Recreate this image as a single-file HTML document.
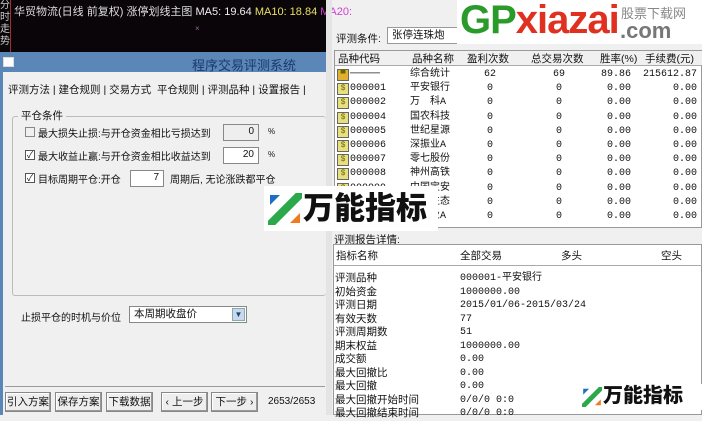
<!DOCTYPE html>
<html><head><meta charset="utf-8"><style>
*{margin:0;padding:0;box-sizing:border-box}
body{width:702px;height:415px;overflow:hidden;background:#f0f0f0;position:relative;font-family:"Liberation Sans","Noto Sans CJK SC",sans-serif;font-size:11px;color:#111}
.a{position:absolute;white-space:nowrap}
.btn{position:absolute;border:1px solid #888;background:#eee;height:20px;top:392px;font-size:10.5px;text-align:center;line-height:18px;box-shadow:inset -1px -1px #999,inset 1px 1px #fff}
.cb{position:absolute;width:10px;height:10px;border:1px solid #555;background:#fff;font-size:9px;line-height:8px;text-align:center}
.inp{position:absolute;background:#fff;border:1px solid #888;text-align:right;padding-right:4px;font-size:10px;line-height:14px;height:17px}
.mono{font-family:"Liberation Mono","Noto Sans CJK SC",monospace}
.s{position:absolute;left:2px;top:1px;width:12px;height:12px;border:1px solid #666;background:#e8e080;font-size:8px;line-height:10px;text-align:center;color:#660}
.r{position:relative;height:14.2px}
.r span{position:absolute}
.c1{left:15px}.c2{left:75px}
.c3{left:130px;width:50px;text-align:center}
.c4{left:190px;width:68px;text-align:center}
.c5{left:250px;width:46px;text-align:right}
.c6{left:300px;width:62px;text-align:right}
</style></head><body>
<div class="a" style="left:0;top:0;width:326px;height:52px;background:#0a0508"></div>
<div class="a" style="left:0;top:0;height:52px;border-right:1px solid #a03030;color:#ccc;font-size:10px;line-height:12px;white-space:normal;width:11px">分时走势</div>
<div class="a" style="left:14px;top:3px;color:#ddd;font-size:11px">华贸物流(日线 前复权) 涨停划线主图 <span style="color:#eee">MA5: 19.64</span> <span style="color:#e8e060">MA10: 18.84</span> <span style="color:#d040d0">MA20:</span></div>
<div class="a" style="left:195px;top:24px;color:#a060a0;font-size:8px">×</div>
<div class="a" style="left:0;top:52px;width:326px;height:20px;background:#5b87b8"></div>
<div class="a" style="left:3px;top:57px;width:11px;height:10px;background:#fff;border:1px solid #ddd"></div>
<div class="a" style="left:192px;top:55px;color:#1a3a6a;font-size:13px">程序交易评测系统</div>
<div class="a" style="left:0;top:72px;width:3px;height:343px;background:#5b87b8"></div>
<div class="a" style="left:8px;top:82px;font-size:10.5px">评测方法 | 建仓规则 | 交易方式 &nbsp;平仓规则 | 评测品种 | 设置报告 |</div>
<div class="a" style="left:12px;top:116px;width:314px;height:180px;border:1px solid #bbb;border-radius:3px;border-right:none"></div>
<div class="a" style="left:18px;top:108px;background:#f0f0f0;padding:0 3px;font-size:10.5px">平仓条件</div>
<div class="cb" style="left:25px;top:127px;border-color:#888;background:#f0f0f0"></div>
<div class="a" style="left:38px;top:125px;font-size:10px">最大损失止损:与开仓资金相比亏损达到</div>
<div class="inp" style="left:223px;top:124px;width:36px;background:#eee">0</div><div class="a" style="left:268px;top:127px;font-size:8px">%</div>
<div class="cb" style="left:25px;top:150px">✓</div>
<div class="a" style="left:38px;top:148px;font-size:10px">最大收益止赢:与开仓资金相比收益达到</div>
<div class="inp" style="left:223px;top:147px;width:36px">20</div><div class="a" style="left:268px;top:150px;font-size:8px">%</div>
<div class="cb" style="left:25px;top:173px">✓</div>
<div class="a" style="left:38px;top:171px;font-size:10px">目标周期平仓:开仓</div>
<div class="inp" style="left:130px;top:170px;width:34px">7</div>
<div class="a" style="left:170px;top:171px;font-size:10px">周期后, 无论涨跌都平仓</div>
<div class="a" style="left:21px;top:309px;font-size:10px">止损平仓的时机与价位</div>
<div class="a" style="left:129px;top:306px;width:118px;height:17px;background:#fff;border:1px solid #888;padding-left:4px;line-height:15px;font-size:10.5px">本周期收盘价</div>
<div class="a" style="left:232px;top:308px;width:13px;height:13px;background:#c8d8ee;border:1px solid #8aa;color:#246;font-size:8px;text-align:center;line-height:12px">▼</div>
<div class="a" style="left:5px;top:386px;width:320px;height:1px;background:#999"></div>
<div class="btn" style="left:5px;width:46px">引入方案</div>
<div class="btn" style="left:55px;width:47px">保存方案</div>
<div class="btn" style="left:106px;width:47px">下载数据</div>
<div class="btn" style="left:161px;width:47px">‹ 上一步</div>
<div class="btn" style="left:211px;width:47px">下一步 ›</div>
<div class="a" style="left:268px;top:396px;font-size:10px">2653/2653</div>
<div class="a" style="left:326px;top:0;width:6px;height:415px;background:#e4e4e4"></div>
<div class="a" style="left:336px;top:31px;font-size:10.5px">评测条件:</div>
<div class="a" style="left:387px;top:27px;width:140px;height:17px;background:#fff;border:1px solid #999;padding-left:4px;line-height:15px;font-size:10.5px">张停连珠炮</div>
<div class="a" style="left:334px;top:50px;width:368px;height:178px;background:#fff;border:1px solid #999"></div>
<div class="a" style="left:335px;top:51px;width:367px;height:15px;background:#f0f0f0;border-bottom:1px solid #aaa;font-size:10.5px">
<div class="r"><span style="left:3px">品种代码</span><span style="left:77px">品种名称</span><span style="left:132px">盈利次数</span><span style="left:196px">总交易次数</span><span style="left:265px">胜率(%)</span><span style="left:310px">手续费(元)</span></div></div>
<div class="a mono" style="left:335px;top:68px;width:367px;font-size:10px;line-height:14.2px">
<div class="r"><span class="s" style="background:#e0b030">▀</span><span class="c1">─────</span><span class="c2">综合统计</span><span class="c3">62</span><span class="c4">69</span><span class="c5">89.86</span><span class="c6">215612.87</span></div>
<div class="r"><span class="s">$</span><span class="c1">000001</span><span class="c2">平安银行</span><span class="c3">0</span><span class="c4">0</span><span class="c5">0.00</span><span class="c6">0.00</span></div>
<div class="r"><span class="s">$</span><span class="c1">000002</span><span class="c2">万　科A</span><span class="c3">0</span><span class="c4">0</span><span class="c5">0.00</span><span class="c6">0.00</span></div>
<div class="r"><span class="s">$</span><span class="c1">000004</span><span class="c2">国农科技</span><span class="c3">0</span><span class="c4">0</span><span class="c5">0.00</span><span class="c6">0.00</span></div>
<div class="r"><span class="s">$</span><span class="c1">000005</span><span class="c2">世纪星源</span><span class="c3">0</span><span class="c4">0</span><span class="c5">0.00</span><span class="c6">0.00</span></div>
<div class="r"><span class="s">$</span><span class="c1">000006</span><span class="c2">深振业A</span><span class="c3">0</span><span class="c4">0</span><span class="c5">0.00</span><span class="c6">0.00</span></div>
<div class="r"><span class="s">$</span><span class="c1">000007</span><span class="c2">零七股份</span><span class="c3">0</span><span class="c4">0</span><span class="c5">0.00</span><span class="c6">0.00</span></div>
<div class="r"><span class="s">$</span><span class="c1">000008</span><span class="c2">神州高铁</span><span class="c3">0</span><span class="c4">0</span><span class="c5">0.00</span><span class="c6">0.00</span></div>
<div class="r"><span class="s">$</span><span class="c1">000009</span><span class="c2">中国宝安</span><span class="c3">0</span><span class="c4">0</span><span class="c5">0.00</span><span class="c6">0.00</span></div>
<div class="r"><span class="s">$</span><span class="c1">000010</span><span class="c2">美丽生态</span><span class="c3">0</span><span class="c4">0</span><span class="c5">0.00</span><span class="c6">0.00</span></div>
<div class="r"><span class="s">$</span><span class="c1">000011</span><span class="c2">深物业A</span><span class="c3">0</span><span class="c4">0</span><span class="c5">0.00</span><span class="c6">0.00</span></div>
</div>
<div class="a" style="left:334px;top:232px;font-size:10.5px">评测报告详情:</div>
<div class="a" style="left:333px;top:244px;width:369px;height:171px;background:#fff;border:1px solid #999"></div>
<div class="a" style="left:336px;top:248px;font-size:10.5px">指标名称</div><div class="a" style="left:460px;top:248px;font-size:10.5px">全部交易</div><div class="a" style="left:561px;top:248px;font-size:10.5px">多头</div><div class="a" style="left:661px;top:248px;font-size:10.5px">空头</div>
<div class="a" style="left:334px;top:265px;width:368px;height:1px;background:#aaa"></div>
<div class="a" style="left:335px;top:272px;line-height:13.5px;font-size:10.5px">评测品种<br>初始资金<br>评测日期<br>有效天数<br>评测周期数<br>期末权益<br>成交额<br>最大回撤比<br>最大回撤<br>最大回撤开始时间<br>最大回撤结束时间</div>
<div class="a mono" style="left:460px;top:272px;line-height:13.5px;font-size:10px">000001-平安银行<br>1000000.00<br>2015/01/06-2015/03/24<br>77<br>51<br>1000000.00<br>0.00<br>0.00<br>0.00<br>0/0/0 0:0<br>0/0/0 0:0</div>
<div class="a" style="left:457px;top:0;width:245px;height:44px;background:#fff"></div>
<div class="a" style="left:460px;top:-4px;font-size:40px;font-weight:bold;letter-spacing:-1px;line-height:48px"><span style="color:#2a9a2a">GP</span><span style="color:#e03020">xiazai</span></div>
<div class="a" style="left:620px;top:18px;font-size:22px;font-weight:bold;color:#777">.com</div>
<div class="a" style="left:621px;top:3px;font-size:13px;color:#888">股票下载网</div>
<div class="a" style="left:264px;top:186px;width:174px;height:45px;background:#fff"></div>
<svg class="a" style="left:268px;top:193px" width="34" height="32" viewBox="0 0 34 32"><path d="M2 2h10l-10 10z" fill="#1c6fc4"/><path d="M2 30l28-28h3l-28 28z" fill="#2aa84a" stroke="#2aa84a" stroke-width="6"/><path d="M32 30h-10l10-10z" fill="#f07a20"/></svg>
<div class="a" style="left:303px;top:190px;font-size:31px;font-weight:900;color:#111;line-height:38px">万能指标</div>
<div class="a" style="left:580px;top:384px;width:122px;height:26px;background:#fff"></div>
<svg class="a" style="left:582px;top:387px" width="20" height="20" viewBox="0 0 34 32"><path d="M2 2h10l-10 10z" fill="#1c6fc4"/><path d="M2 30l28-28h3l-28 28z" fill="#2aa84a" stroke="#2aa84a" stroke-width="6"/><path d="M32 30h-10l10-10z" fill="#f07a20"/></svg>
<div class="a" style="left:603px;top:383px;font-size:20px;font-weight:900;line-height:26px">万能指标</div>
</body></html>
